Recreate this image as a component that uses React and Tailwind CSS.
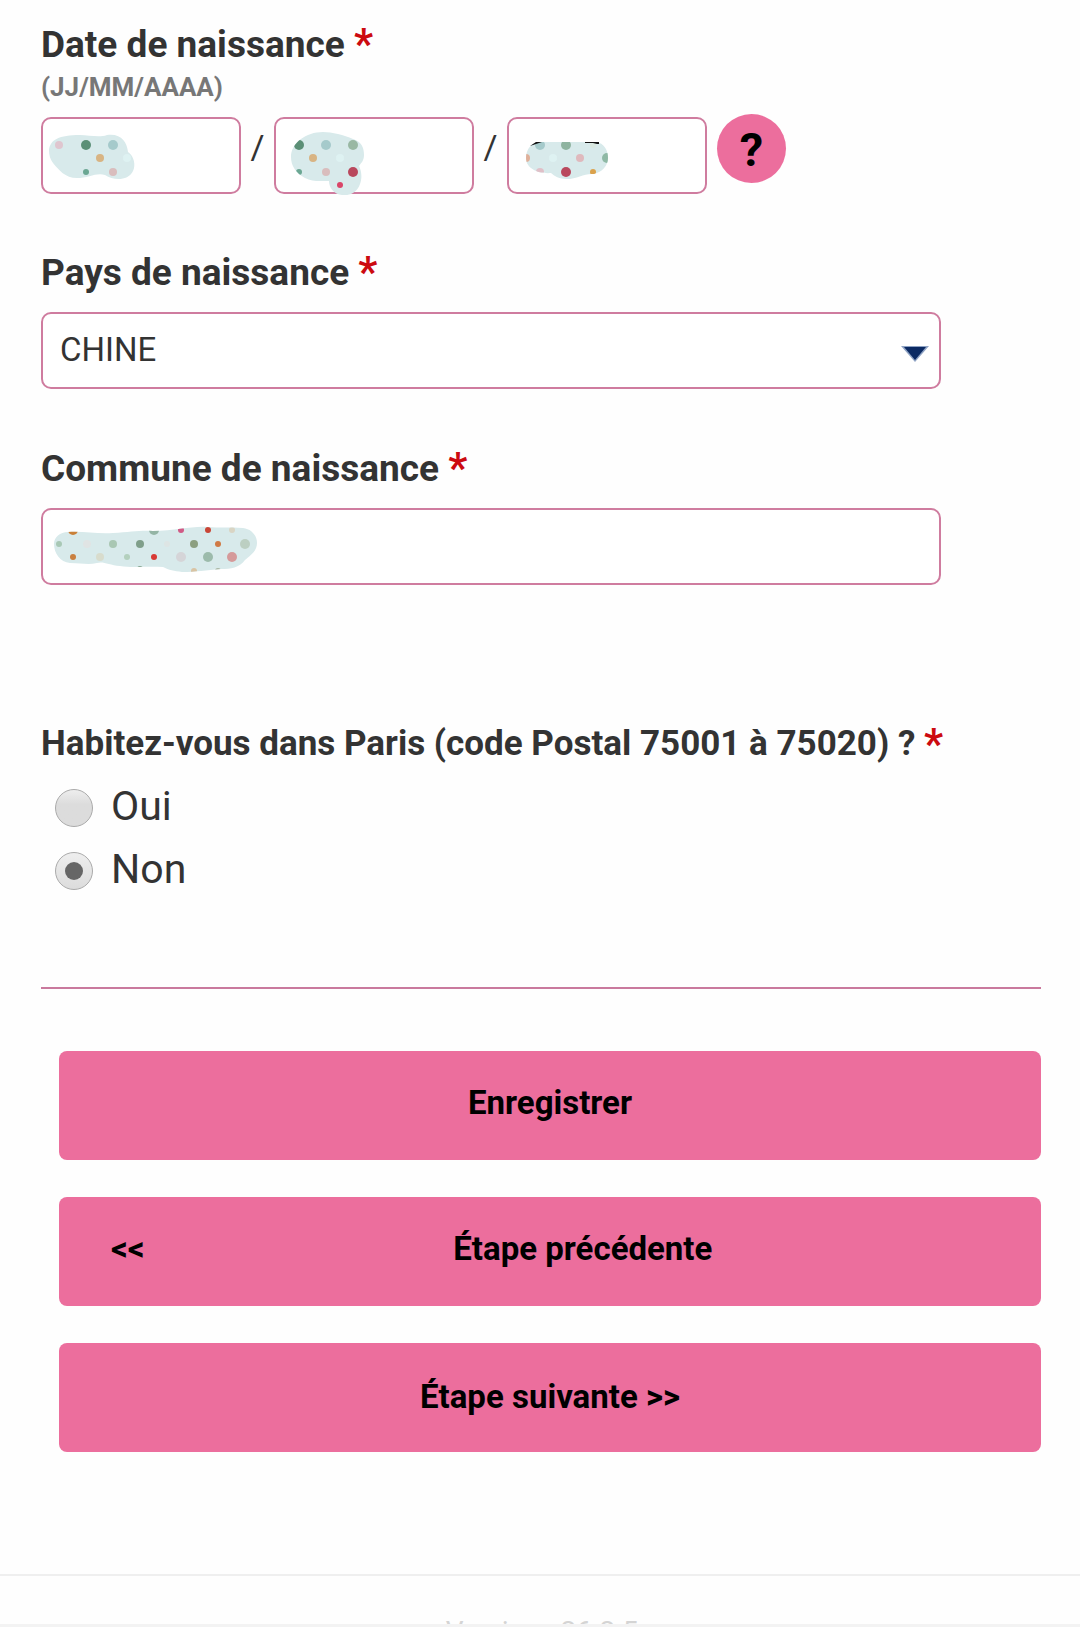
import { useState } from "react";

const daySpots = [
  [18, 28, 4, "#dfc6cf"],
  [45, 28, 5, "#5b8f76"],
  [72, 28, 5, "#a5cacb"],
  [59, 41, 4, "#d8b483"],
  [86, 41, 4, "#def2f2"],
  [45, 55, 3, "#6ba793"],
  [72, 55, 4, "#d9bdbd"],
];

const monthSpots = [
  [25, 28, 5, "#5b8f76"],
  [52, 28, 5, "#a5cacb"],
  [79, 28, 5, "#99b8a3"],
  [39, 41, 4, "#d8b483"],
  [66, 41, 4, "#def2f2"],
  [25, 55, 3, "#6ba793"],
  [52, 55, 4, "#d9bdbd"],
  [79, 55, 5, "#b9485d"],
  [66, 68, 3, "#d94668"],
];

const yearSpots = [
  [33, 28, 5, "#a5cacb"],
  [59, 28, 5, "#8fb4a0"],
  [86, 28, 3, "#d9e8e0"],
  [19, 41, 4, "#dfb09a"],
  [46, 41, 4, "#def2f2"],
  [73, 41, 4, "#dfb9bd"],
  [100, 41, 5, "#8fb9a5"],
  [33, 55, 4, "#e0c0c8"],
  [59, 55, 5, "#b9485d"],
  [86, 55, 3, "#dba24c"],
];

const citySpots = [
  [32, 22, 5, "#c98038"],
  [113, 22, 5, "#94b5a5"],
  [140, 22, 3, "#d05a85"],
  [167, 22, 3, "#c94535"],
  [191, 22, 3, "#d9d5c4"],
  [18, 36, 3, "#a8c8b5"],
  [46, 36, 4, "#e0e4e4"],
  [72, 36, 4, "#a9c7b3"],
  [99, 36, 4, "#7f9f8a"],
  [126, 36, 3, "#dde5e4"],
  [153, 36, 4, "#8c9f80"],
  [177, 36, 3, "#d07a45"],
  [204, 36, 5, "#bccfc2"],
  [32, 49, 3, "#c98040"],
  [59, 49, 4, "#d8dccd"],
  [86, 49, 3, "#b3d0bd"],
  [113, 49, 3, "#d83a35"],
  [140, 49, 5, "#d5d5d8"],
  [167, 49, 5, "#9cbbab"],
  [191, 49, 5, "#d59a9a"],
  [99, 61, 3, "#7f9f8a"],
  [153, 63, 3, "#d9c4a4"],
  [177, 63, 3, "#a9b7a3"],
];

const DAY_SHAPE =
  "M8 33 C9 23 18 18 39 18 C48 18 58 21 66 18 C80 16 86 25 87 35 C93 39 95 48 92 54 C87 64 73 64 64 58 C56 55 47 61 36 61 C24 61 18 53 12 46 C9 42 8 38 8 33Z";
const MONTH_SHAPE =
  "M17 40 C17 26 32 15 49 15 C58 15 70 18 79 22 C88 25 90 31 90 38 C90 44 87 46 85 49 C88 55 88 62 86 67 C83 76 75 79 68 78 C60 77 55 71 55 64 C46 64 38 65 31 61 C22 56 17 49 17 40Z";
const YEAR_SHAPE =
  "M19 41 C19 32 25 25 32 25 L89 25 C97 26 101 33 101 41 C101 49 95 55 87 57 C77 56 71 62 59 62 C53 62 47 59 44 56 C32 57 19 52 19 41Z";
const CITY_SHAPE =
  "M13 36 C13 29 19 24 27 24 C43 23 55 26 72 25 C90 24 100 22 112 23 C135 23 150 18 166 19 C180 20 188 19 202 20 C211 21 216 28 216 35 C216 44 208 48 204 52 C198 60 190 61 180 61 C165 62 155 64 141 64 C133 63 128 62 122 59 C105 58 92 60 79 58 C68 57 62 53 56 55 C47 57 40 55 29 55 C19 54 13 45 13 36Z";

function Patch({ id, shape, spots, marks, className }) {
  return (
    <svg
      className={`absolute -top-[2px] left-0 h-20 pointer-events-none ${className}`}
      viewBox={id === "city" ? "0 -2 220 80" : "0 -2 110 80"}
      aria-hidden="true"
    >
      <clipPath id={`clip-${id}`}>
        <path d={shape} />
      </clipPath>
      <path d={shape} fill="#d8eaeb" />
      <g clipPath={`url(#clip-${id})`}>
        {spots.map(([x, y, r, color]) => (
          <circle key={`${x}-${y}`} cx={x} cy={y} r={r} fill={color} />
        ))}
      </g>
      {marks && <path d={marks} fill="#111" />}
    </svg>
  );
}

function Star() {
  return (
    <span className="align-text-top text-[42px] leading-none text-[#cc0a10]">
      *
    </span>
  );
}

const fieldClass =
  "block w-full h-[77px] border-2 border-[#cf7c9f] rounded-[10px] bg-white px-[17px] text-[33px] text-[#333] outline-none";
const labelClass = "block text-[37px] leading-[48px] font-bold";
const buttonClass =
  "flex items-center w-full h-[109px] rounded-lg bg-[#ec6e9d] text-[33px] font-bold text-black";

export default function App() {
  const [day, setDay] = useState("");
  const [month, setMonth] = useState("");
  const [year, setYear] = useState("");
  const [country, setCountry] = useState("CHINE");
  const [city, setCity] = useState("");
  const [paris, setParis] = useState("non");

  return (
    <div className="bg-[#fefefe] font-['Roboto',sans-serif] text-[#333]">
      <form
        className="pt-[21px] pl-[41px] pr-[39px]"
        onSubmit={(e) => e.preventDefault()}
      >
        {/* Date de naissance */}
        <fieldset>
          <legend className="block">
            <span className={labelClass}>
              Date de naissance <Star />
            </span>
            <span className="block text-[26px] leading-9 font-bold text-[#777]">
              (JJ/MM/AAAA)
            </span>
          </legend>
          <div className="flex items-start pt-[9px]">
            <div className="flex items-start pt-[3px] text-[34px] leading-[60px]">
              <div className="relative w-[200px]">
                <input
                  type="text"
                  aria-label="Jour"
                  className={fieldClass}
                  value={day}
                  onChange={(e) => setDay(e.target.value)}
                />
                <Patch
                  id="day"
                  shape={DAY_SHAPE}
                  spots={daySpots}
                  className="w-[110px]"
                />
              </div>
              <span className="w-[33px] text-center">/</span>
              <div className="relative w-[200px]">
                <input
                  type="text"
                  aria-label="Mois"
                  className={fieldClass}
                  value={month}
                  onChange={(e) => setMonth(e.target.value)}
                />
                <Patch
                  id="month"
                  shape={MONTH_SHAPE}
                  spots={monthSpots}
                  className="w-[110px]"
                />
              </div>
              <span className="w-[33px] text-center">/</span>
              <div className="relative w-[200px]">
                <input
                  type="text"
                  aria-label="Année"
                  className={fieldClass}
                  value={year}
                  onChange={(e) => setYear(e.target.value)}
                />
                <Patch
                  id="year"
                  shape={YEAR_SHAPE}
                  spots={yearSpots}
                  marks="M23 29 L29 25 L35 25 L29 27Z M78 25 L92 25 L92 27 L90 27 L86 26 L78 26Z"
                  className="w-[110px]"
                />
              </div>
            </div>
            <button
              type="button"
              className="ml-[10px] flex size-[69px] items-center justify-center rounded-full bg-[#ec6e9d] pt-[2px] text-[47px] leading-none font-bold text-black"
            >
              ?
            </button>
          </div>
        </fieldset>

        {/* Pays de naissance */}
        <div className="mt-[55px] max-w-[900px]">
          <label htmlFor="country" className={labelClass}>
            Pays de naissance <Star />
          </label>
          <div className="relative mt-[15px]">
            <select
              id="country"
              className={`${fieldClass} appearance-none pb-[2px]`}
              value={country}
              onChange={(e) => setCountry(e.target.value)}
            >
              <option value="CHINE">CHINE</option>
            </select>
            <svg
              className="absolute right-3 top-[34px] h-4 w-7 pointer-events-none"
              viewBox="0 0 28 16"
              aria-hidden="true"
            >
              <path d="M0 0H28L14 16Z" fill="#8fa3c4" />
              <path d="M3 1H25L14 14Z" fill="#0b2a63" />
            </svg>
          </div>
        </div>

        {/* Commune de naissance */}
        <div className="mt-14 max-w-[900px]">
          <label htmlFor="city" className={labelClass}>
            Commune de naissance <Star />
          </label>
          <div className="relative mt-[15px]">
            <input
              id="city"
              type="text"
              className={fieldClass}
              value={city}
              onChange={(e) => setCity(e.target.value)}
            />
            <Patch
              id="city"
              shape={CITY_SHAPE}
              spots={citySpots}
              className="w-[220px]"
            />
          </div>
        </div>

        {/* Paris */}
        <fieldset className="mt-[135px]">
          <legend className="text-[35px] leading-[48px] font-bold">
            Habitez-vous dans Paris (code Postal 75001 à 75020) ? <Star />
          </legend>
          <div className="pt-2">
            {[
              ["oui", "Oui"],
              ["non", "Non"],
            ].map(([value, text]) => (
              <label
                key={value}
                className="flex h-[63px] items-center gap-[18px] pl-[14px] text-[41px]"
              >
                <input
                  type="radio"
                  name="paris"
                  value={value}
                  checked={paris === value}
                  onChange={() => setParis(value)}
                  className="flex size-[38px] shrink-0 appearance-none items-center justify-center rounded-full border border-[#aaa] bg-linear-to-b from-[#eee] to-[#dcdcdc] to-40% checked:to-100% checked:before:size-[18px] checked:before:rounded-full checked:before:bg-[#666] checked:before:content-['']"
                />
                <span className="pb-[2px]">{text}</span>
              </label>
            ))}
          </div>
        </fieldset>

        <hr className="mt-[85px] border-t-2 border-[#c9799d]" />

        <div className="mt-[62px] flex flex-col gap-[37px] pl-[18px]">
          <button type="submit" className={`${buttonClass} justify-center pb-[6px]`}>
            Enregistrer
          </button>
          <button
            type="button"
            className={`${buttonClass} pl-[52px] pr-5 pb-[6px]`}
          >
            <span>&lt;&lt;</span>
            <span className="flex-1 text-center">Étape précédente</span>
          </button>
          <button type="button" className={`${buttonClass} justify-center pb-[2px]`}>
            Étape suivante &gt;&gt;
          </button>
        </div>
      </form>

      <footer className="mt-[122px] border-t-2 border-b-[3px] border-t-[#efefef] border-b-[#f3f3f3]">
        <p className="h-12 overflow-hidden pt-[38px] pl-1 text-center text-[28px] leading-9 text-[#d4d4d4]">
          Version : 26.2.5
        </p>
      </footer>
    </div>
  );
}
